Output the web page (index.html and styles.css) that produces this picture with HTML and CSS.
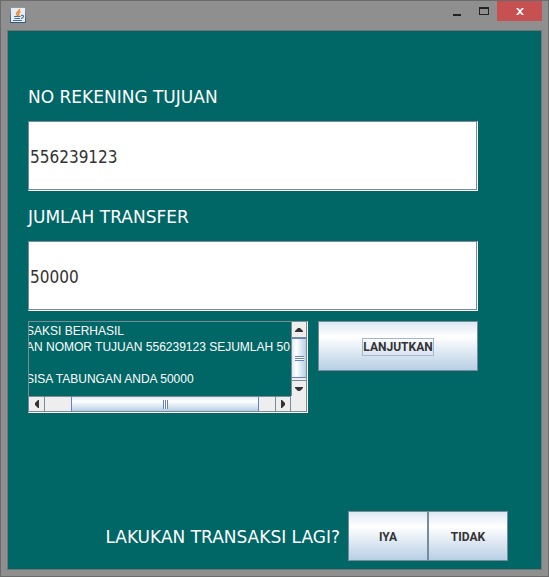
FILE: index.html
```html
<!DOCTYPE html>
<html lang="id">
<head>
<meta charset="utf-8">
<title>Transfer</title>
<link rel="stylesheet" href="styles.css">
</head>
<body>
<div class="window">
  <header class="titlebar">
    <svg class="app-icon" width="16" height="16" viewBox="0 0 16 16" aria-hidden="true">
      <defs>
        <linearGradient id="tile" x1="0" y1="0" x2="0" y2="1">
          <stop offset="0" stop-color="#8e9ba6"/><stop offset="1" stop-color="#2e5878"/>
        </linearGradient>
      </defs>
      <rect width="16" height="16" rx="1" fill="url(#tile)"/>
      <rect x="1" y="1" width="14" height="14" fill="#e9edf0"/>
      <path d="M9.500 2C10 4 6 5 6.500 7L8 9M10.500 4.500C7.500 5.500 9.500 7 8.500 8.500" fill="none" stroke="#e8842c" stroke-width="1.500"/>
      <path d="M4 9.500H10.500M4.500 11.500H10M3 13.500H12M11 8.500C14.500 7.500 14 11 11 11.500" fill="none" stroke="#44728f" stroke-width="1.200"/>
    </svg>
    <div class="window-buttons">
      <button class="win-btn minimize" aria-label="Minimize"><svg width="8" height="12" viewBox="0 0 8 12"><path d="M0 9h8v2H0z" fill="#222"/></svg></button>
      <button class="win-btn maximize" aria-label="Maximize"><svg width="10" height="8" viewBox="0 0 10 8"><path d="M0 0h10v8H0zM1 2v5h8V2z" fill="#222" fill-rule="evenodd"/></svg></button>
      <button class="win-btn close" aria-label="Close"><svg width="8" height="7" viewBox="0 0 8 7"><path d="M0 0h2l2 2 2-2h2L5 3.500 8 7H6L4 5 2 7H0l3-3.500z" fill="#fff"/></svg></button>
    </div>
  </header>
  <main class="content">
    <form class="transfer">
      <label class="caption" for="account">NO REKENING TUJUAN</label>
      <input class="field" id="account" type="text" value="556239123">
      <label class="caption" for="amount">JUMLAH TRANSFER</label>
      <input class="field" id="amount" type="text" value="50000">
      <div class="result-row">
        <div class="scroll-pane">
          <div class="viewport">
            <pre class="message">SAKSI BERHASIL
AN NOMOR TUJUAN 556239123 SEJUMLAH 50

SISA TABUNGAN ANDA 50000</pre>
          </div>
          <div class="scrollbar vertical">
            <button type="button" class="arrow up" aria-label="Scroll up"><svg width="8" height="4" viewBox="0 0 8 4"><path d="M3 0h2l3 3v1H0V3z" fill="#333"/></svg></button>
            <div class="thumb"><span class="grip"></span></div>
            <button type="button" class="arrow down" aria-label="Scroll down"><svg width="8" height="4" viewBox="0 0 8 4"><path d="M3 4h2l3-3V0H0v1z" fill="#333"/></svg></button>
          </div>
          <div class="scrollbar horizontal">
            <button type="button" class="arrow left" aria-label="Scroll left"><svg width="4" height="8" viewBox="0 0 4 8"><path d="M0 3v2l3 3h1V0H3z" fill="#333"/></svg></button>
            <div class="thumb"><span class="grip"></span></div>
            <button type="button" class="arrow right" aria-label="Scroll right"><svg width="4" height="8" viewBox="0 0 4 8"><path d="M4 3v2L1 8H0V0h1z" fill="#333"/></svg></button>
          </div>
          <div class="corner"></div>
        </div>
        <button type="button" class="button submit"><span class="focus">LANJUTKAN</span></button>
      </div>
    </form>
    <div class="again">
      <span class="question">LAKUKAN TRANSAKSI LAGI?</span>
      <button type="button" class="button">IYA</button>
      <button type="button" class="button">TIDAK</button>
    </div>
  </main>
</div>
</body>
</html>
```
FILE: styles.css
```css
* { box-sizing: border-box; }
body { margin: 0; }
button { padding: 0; border: 0; font: inherit; }
svg { display: block; }

.window {
  display: flex;
  flex-direction: column;
  min-height: 100vh;
  padding: 0 6px 6px;
  border: 1px solid #6b6b6b;
  background: #8f8f8f;
}

.titlebar {
  display: flex;
  justify-content: space-between;
  height: 29px;
  padding: 0 0 0 3px;
}
.app-icon { margin-top: 6px; }
.window-buttons { display: flex; height: 20px; }
.win-btn {
  display: flex;
  align-items: center;
  justify-content: center;
  width: 27px;
  background: none;
}
.win-btn.close { width: 45px; background: #c75050; }

.content {
  flex: 1;
  display: flex;
  flex-direction: column;
  justify-content: space-between;
  padding: 40px 33px 8px 20px;
  border: 1px solid #757575;
  background: #006666;
  color: #fff;
}
.transfer { margin-right: 30px; }
.caption, .question { font: 17px/20px "DejaVu Sans", sans-serif; }
.caption { display: flex; align-items: center; height: 50px; padding-top: 2px; }
.field {
  display: block;
  width: 100%;
  height: 70px;
  padding: 2px 1px 0;
  border: 1px solid #7a8a99;
  border-right-color: #fff;
  border-bottom-color: #fff;
  border-radius: 0;
  box-shadow: inset -1px -1px #7a8a99;
  background: #fff;
  color: #333;
  font: 17px/20px "DejaVu Sans Condensed", "DejaVu Sans", sans-serif;
  font-stretch: condensed;
}

.result-row {
  display: flex;
  align-items: flex-start;
  gap: 10px;
  margin-top: 10px;
}
.scroll-pane {
  flex: 1;
  display: grid;
  grid-template: 74px 16px / 1fr 16px;
  border: 1px solid #7a8a99;
  border-right-color: #fff;
  border-bottom-color: #fff;
}
.viewport { min-width: 0; padding-top: 1px; overflow: hidden; }
/* the text is scrolled slightly to the right */
.message {
  margin: 0 0 0 -3px;
  font: 12px/16px "Liberation Sans", Arial, sans-serif;
}
.scrollbar { display: flex; background: #eee; border: 1px solid #7a8a99; }
.vertical { flex-direction: column; border-width: 0 1px; }
.horizontal { border-width: 1px 0; }
.arrow {
  display: flex;
  flex: none;
  align-items: center;
  justify-content: center;
  background: #eee;
}
.vertical .arrow { height: 16px; }
.horizontal .arrow { width: 16px; }
.up { border-bottom: 1px solid #7a8a99; }
.down { border: solid #7a8a99; border-width: 1px 0 0; }
.left { border-right: 1px solid #7a8a99; }
.right { border: solid #7a8a99; border-width: 0 1px; }
.thumb {
  display: flex;
  flex: 1;
  align-items: center;
  justify-content: center;
  border: solid #6382bf;
}
.vertical .thumb {
  margin-bottom: 2px;
  border-width: 1px 0;
  background: linear-gradient(to right, #dde8f3, #fff 30%, #b8cfe5);
}
.horizontal .thumb {
  margin: 0 16px 0 26px;
  border-width: 0 1px;
  background: linear-gradient(#dde8f3, #fff 30%, #b8cfe5);
}
.vertical .grip { width: 9px; height: 5px; background: repeating-linear-gradient(#6382bf 0 1px, #fff 1px 2px); }
.horizontal .grip { width: 5px; height: 9px; background: repeating-linear-gradient(to right, #6382bf 0 1px, #fff 1px 2px); }
.corner { border: solid #7a8a99; border-width: 0 1px 1px 0; background: #eee; }

.button {
  width: 80px;
  height: 50px;
  padding-top: 1px;
  border: 1px solid #7a8a99;
  background: linear-gradient(#dde8f3, #fff 30%, #b8cfe5);
  color: #333;
  font: bold 12px/16px Roboto, "Liberation Sans", sans-serif;
}
.button.submit { flex: none; width: 160px; }
.focus { display: inline-block; border: 1px solid #a3b8cc; }

.again { display: flex; align-items: center; justify-content: flex-end; }
.question { margin-right: 8px; padding-top: 2px; }
```
